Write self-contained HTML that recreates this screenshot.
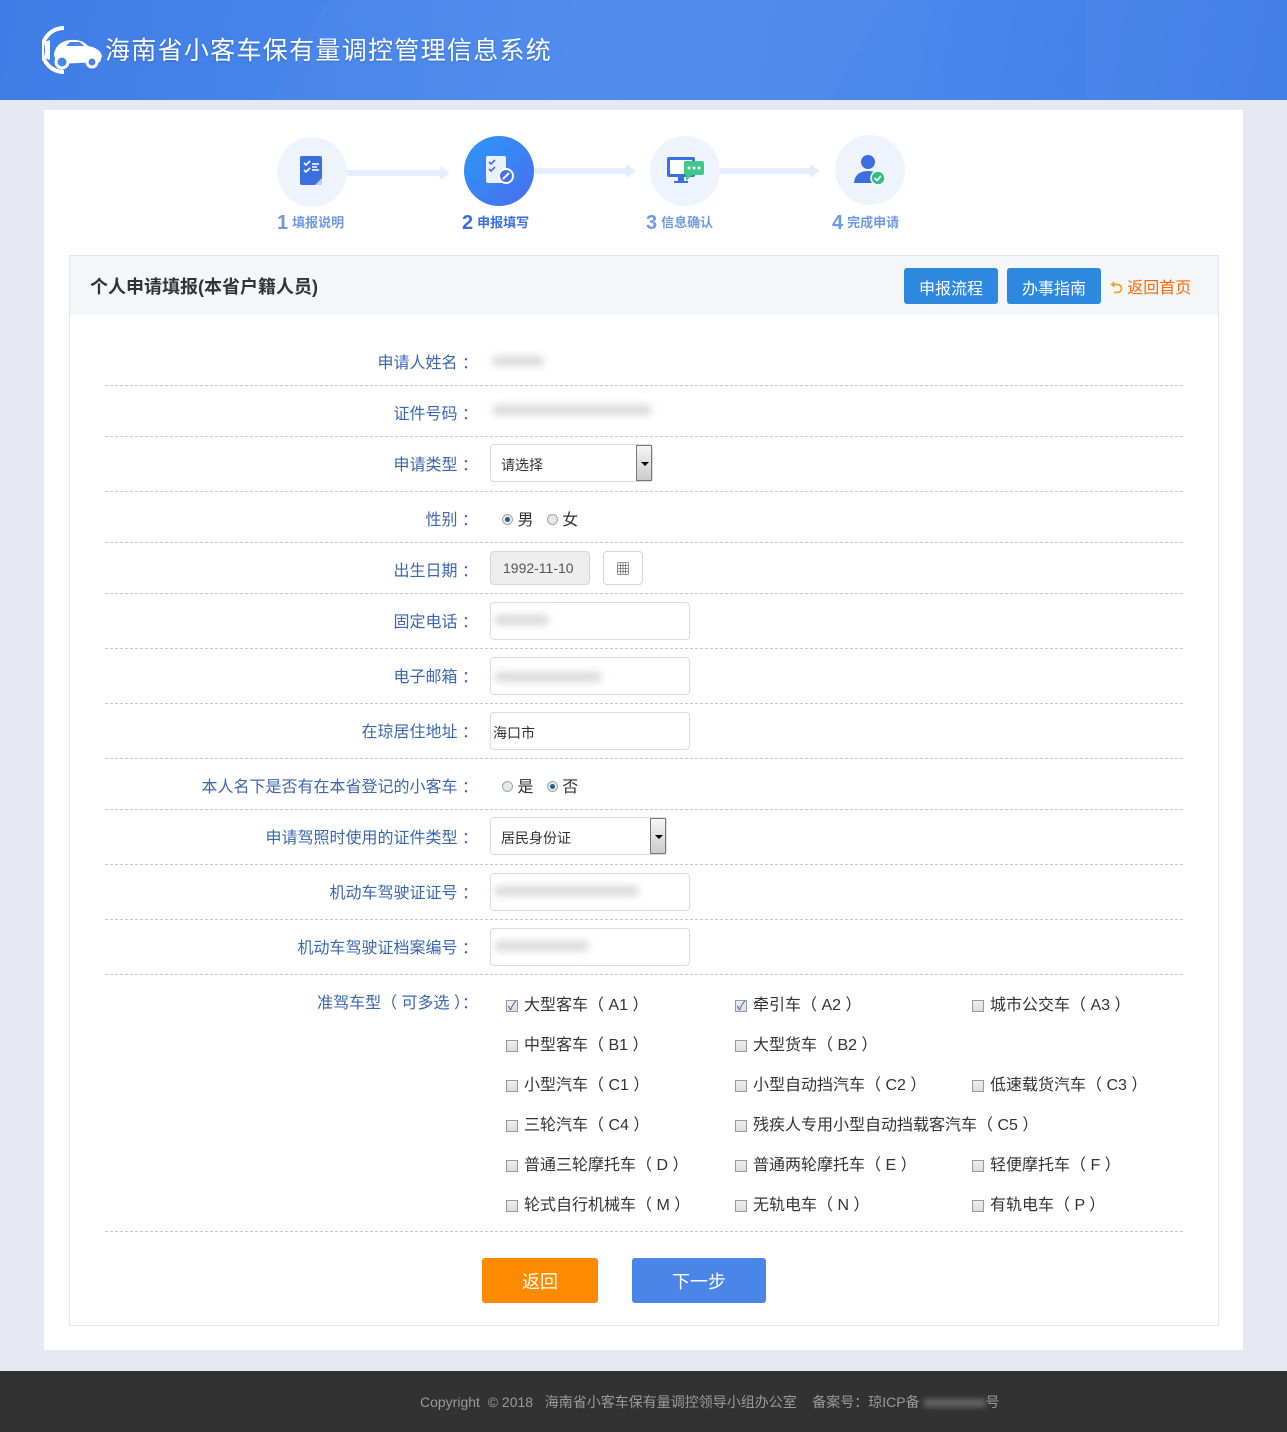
<!DOCTYPE html>
<html><head><meta charset="utf-8">
<style>
*{margin:0;padding:0;box-sizing:border-box}
body{width:1287px;height:1432px;background:#e6e9f2;font-family:"Liberation Sans","Noto Sans CJK SC",sans-serif;position:relative;overflow:hidden;color:#333}
.abs{position:absolute}
.hdr{left:0;top:0;width:1287px;height:100px;background:linear-gradient(100deg,#3f7de6 0%,#4c8bee 45%,#4a88ec 70%,#3c7be6 100%);overflow:hidden}
.title{left:105px;top:31px;color:#fff;font-size:25px;letter-spacing:1.3px;text-shadow:0 1px 2px rgba(0,0,0,.2)}
.wrap{left:44px;top:110px;width:1199px;height:1240px;background:#fff}
.panel{left:69px;top:255px;width:1150px;height:1071px;border:1px solid #e3e6ee;background:#fff}
.ph{left:70px;top:256px;width:1148px;height:59px;background:#f5f6fa}
.circ{width:70px;height:70px;border-radius:50%;background:#eef3fc}
.step{font-size:13px;color:#6e9ae0;font-weight:bold}
.step b{font-size:20px;font-family:"Liberation Sans",sans-serif;margin-right:4px;vertical-align:-2px}
.arrow{height:6px;background:#e5eefc}
.lbl{width:320px;right:809px;text-align:right;color:#3b67b0;font-size:16px;white-space:nowrap}
.dash{left:105px;width:1078px;border-top:1px dashed #c8c8c8}
.inp{left:490px;width:200px;height:38px;border:1px solid #dcdcdc;border-radius:4px;background:#fff;font-size:14px;padding:10px 0 0 2px}
.blur{background:#d8d8d8;filter:blur(4px);height:10px;border-radius:5px}
.radio{width:11px;height:11px;border-radius:50%;border:1px solid #9aa;background:#e8e8e8;display:inline-block}
.radio.on::after{content:"";display:block;width:5px;height:5px;margin:2px;border-radius:50%;background:#245c9c}
.cb{font-size:16px;color:#333;white-space:nowrap}
.cb i{display:inline-block;width:12px;height:12px;border:1px solid #999;background:linear-gradient(#eee,#ddd);vertical-align:-2px;margin-right:6px;position:relative}
.cb i.on::after{content:"✓";position:absolute;left:1px;top:-4px;font-size:12px;color:#3a4fa0;font-style:normal}
.sel{left:490px;height:38px;border:1px solid #dcdcdc;border-radius:4px;font-size:14px;padding:10px 0 0 10px;background:#fff}
.sel .dd{position:absolute;right:0;top:0;width:16px;height:36px;border:1px solid #777;background:linear-gradient(#f5f5f5,#ccc)}
.sel .dd::after{content:"";position:absolute;left:4px;top:16px;border:4px solid transparent;border-top:4px solid #000}
.btn{color:#fff;font-size:16px;text-align:center;border-radius:3px}
</style></head><body>
<div class="abs hdr">
 <div class="abs" style="left:300px;top:-50px;width:560px;height:200px;background:rgba(255,255,255,.025);transform:skewX(-30deg)"></div>
 <div class="abs" style="left:1085px;top:0;width:202px;height:100px;background:rgba(255,255,255,.03)"></div>
 <svg class="abs" style="left:42px;top:24px" width="62" height="52" viewBox="0 0 62 52">
  <path d="M22 4 A22 22 0 1 0 22 48" stroke="#fff" stroke-width="4" fill="none"/>
  <path d="M3 18 L8 16 L8 36 L3 34 Z" fill="#fff"/>
  <path d="M12 30 Q14 18 28 16 Q40 15 46 22 Q58 24 60 32 L58 38 L14 40 Z" fill="#fff"/>
  <circle cx="20" cy="38" r="6" fill="#4a86ea" stroke="#fff" stroke-width="3"/>
  <circle cx="50" cy="38" r="5" fill="#4a86ea" stroke="#fff" stroke-width="3"/>
  <path d="M24 22 L42 22 L38 18 L28 18Z" fill="#4a86ea"/>
 </svg>
 <div class="abs title">海南省小客车保有量调控管理信息系统</div>
</div>
<div class="abs wrap"></div>

<div class="abs circ" style="left:277px;top:137px"></div>
<div class="abs circ" style="left:464px;top:136px;background:linear-gradient(135deg,#2a9af5,#4a6cf0)"></div>
<div class="abs circ" style="left:650px;top:136px"></div>
<div class="abs circ" style="left:835px;top:135px"></div>
<div class="abs arrow" style="left:347px;top:170px;width:95px"></div><div class="abs" style="left:440px;top:166px;border:7px solid transparent;border-left:10px solid #e5eefc"></div>
<div class="abs arrow" style="left:534px;top:168px;width:94px"></div><div class="abs" style="left:626px;top:164px;border:7px solid transparent;border-left:10px solid #e5eefc"></div>
<div class="abs arrow" style="left:720px;top:168px;width:92px"></div><div class="abs" style="left:810px;top:164px;border:7px solid transparent;border-left:10px solid #e5eefc"></div>
<svg class="abs" style="left:299px;top:155px" width="28" height="32"><rect x="1" y="1" width="22" height="29" rx="2" fill="#3b6fe0"/><path d="M16 30 L23 23 L23 30Z" fill="#bcd0f6"/><path d="M5 8 l2 2 4-4 M5 15 l2 2 4-4" stroke="#fff" stroke-width="1.6" fill="none"/><path d="M13 9h7M13 15h7M13 12h5" stroke="#fff" stroke-width="1.6"/></svg>
<svg class="abs" style="left:484px;top:155px" width="32" height="32"><rect x="2" y="1" width="20" height="27" rx="2" fill="#e9f0ff"/><path d="M5 7 l2 2 4-4 M5 14 l2 2 4-4" stroke="#4a6cf0" stroke-width="1.6" fill="none"/><circle cx="22" cy="21" r="8" fill="#fff"/><circle cx="22" cy="21" r="6" fill="#4a6cf0"/><path d="M19 24 L25 18" stroke="#fff" stroke-width="2"/></svg>
<svg class="abs" style="left:666px;top:155px" width="40" height="30"><rect x="1" y="2" width="28" height="20" rx="2" fill="#3b6fe0"/><rect x="4" y="5" width="22" height="14" fill="#fff"/><rect x="12" y="22" width="6" height="4" fill="#3b6fe0"/><rect x="8" y="26" width="14" height="2" fill="#3b6fe0"/><rect x="18" y="6" width="20" height="14" rx="2" fill="#3cc98a"/><path d="M20 20 L20 26 L26 20Z" fill="#3cc98a"/><circle cx="23" cy="13" r="1.5" fill="#fff"/><circle cx="28" cy="13" r="1.5" fill="#fff"/><circle cx="33" cy="13" r="1.5" fill="#fff"/></svg>
<svg class="abs" style="left:852px;top:153px" width="36" height="34"><circle cx="16" cy="9" r="7" fill="#3b6fe0"/><path d="M2 30 Q3 18 16 18 Q29 18 30 30Z" fill="#3b6fe0"/><circle cx="26" cy="25" r="7" fill="#2ec27e" stroke="#fff" stroke-width="1.5"/><path d="M22.5 25 l2.5 2.5 4-4.5" stroke="#fff" stroke-width="1.8" fill="none"/></svg>
<div class="abs step" style="left:277px;top:212px"><b>1</b>填报说明</div>
<div class="abs step" style="left:462px;top:212px;color:#3a6fe0"><b>2</b>申报填写</div>
<div class="abs step" style="left:646px;top:212px"><b>3</b>信息确认</div>
<div class="abs step" style="left:832px;top:212px"><b>4</b>完成申请</div>

<div class="abs panel"></div>
<div class="abs ph"></div>
<div class="abs" style="left:90px;top:273px;font-size:18px;font-weight:bold;color:#333">个人申请填报(本省户籍人员)</div>
<div class="abs btn" style="left:904px;top:268px;width:94px;height:36px;background:#2d89e0;padding-top:7px">申报流程</div>
<div class="abs btn" style="left:1007px;top:268px;width:94px;height:36px;background:#2d89e0;padding-top:7px">办事指南</div>
<div class="abs" style="left:1110px;top:274px;font-size:16px;color:#ff6a00"><span style="color:#f5a030;font-weight:bold">⮌</span> 返回首页</div>

<div class="abs lbl" style="top:349px">申请人姓名 ：</div><div class="abs blur" style="left:492px;top:356px;width:52px"></div>
<div class="abs dash" style="top:385px"></div>
<div class="abs lbl" style="top:400px">证件号码 ：</div><div class="abs blur" style="left:492px;top:405px;width:160px"></div>
<div class="abs dash" style="top:436px"></div>
<div class="abs lbl" style="top:451px">申请类型 ：</div>
<div class="abs sel" style="top:444px;width:163px">请选择<span class="dd"></span></div>
<div class="abs dash" style="top:491px"></div>
<div class="abs lbl" style="top:506px">性别 ：</div>
<div class="abs" style="left:502px;top:506px;font-size:16px"><span class="radio on"></span> 男 &nbsp; <span class="radio"></span> 女</div>
<div class="abs dash" style="top:542px"></div>
<div class="abs lbl" style="top:557px">出生日期 ：</div>
<div class="abs" style="left:490px;top:551px;width:100px;height:34px;background:#eee;border:1px solid #d5d5d5;border-radius:4px;font-size:14px;color:#555;padding:8px 0 0 12px">1992-11-10</div>
<div class="abs" style="left:603px;top:551px;width:40px;height:34px;border:1px solid #d5d5d5;border-radius:4px;text-align:center;padding-top:7px;font-size:14px">▦</div>
<div class="abs dash" style="top:593px"></div>
<div class="abs lbl" style="top:608px">固定电话 ：</div><div class="abs inp" style="top:602px"></div><div class="abs blur" style="left:494px;top:615px;width:55px"></div>
<div class="abs dash" style="top:648px"></div>
<div class="abs lbl" style="top:663px">电子邮箱 ：</div><div class="abs inp" style="top:657px"></div><div class="abs blur" style="left:494px;top:672px;width:108px"></div>
<div class="abs dash" style="top:703px"></div>
<div class="abs lbl" style="top:718px">在琼居住地址 ：</div><div class="abs inp" style="top:712px">海口市</div>
<div class="abs dash" style="top:758px"></div>
<div class="abs lbl" style="top:773px">本人名下是否有在本省登记的小客车 ：</div>
<div class="abs" style="left:502px;top:773px;font-size:16px"><span class="radio"></span> 是 &nbsp; <span class="radio on"></span> 否</div>
<div class="abs dash" style="top:809px"></div>
<div class="abs lbl" style="top:824px">申请驾照时使用的证件类型 ：</div>
<div class="abs sel" style="top:817px;width:177px">居民身份证<span class="dd"></span></div>
<div class="abs dash" style="top:864px"></div>
<div class="abs lbl" style="top:879px">机动车驾驶证证号 ：</div><div class="abs inp" style="top:873px"></div><div class="abs blur" style="left:494px;top:886px;width:145px"></div>
<div class="abs dash" style="top:919px"></div>
<div class="abs lbl" style="top:934px">机动车驾驶证档案编号 ：</div><div class="abs inp" style="top:928px"></div><div class="abs blur" style="left:494px;top:941px;width:95px"></div>
<div class="abs dash" style="top:974px"></div>
<div class="abs lbl" style="top:989px">准驾车型（ 可多选 ）：</div>

<div class="abs cb" style="left:506px;top:991px"><i class="on"></i>大型客车（ A1 ）</div>
<div class="abs cb" style="left:735px;top:991px"><i class="on"></i>牵引车（ A2 ）</div>
<div class="abs cb" style="left:972px;top:991px"><i></i>城市公交车（ A3 ）</div>
<div class="abs cb" style="left:506px;top:1031px"><i></i>中型客车（ B1 ）</div>
<div class="abs cb" style="left:735px;top:1031px"><i></i>大型货车（ B2 ）</div>
<div class="abs cb" style="left:506px;top:1071px"><i></i>小型汽车（ C1 ）</div>
<div class="abs cb" style="left:735px;top:1071px"><i></i>小型自动挡汽车（ C2 ）</div>
<div class="abs cb" style="left:972px;top:1071px"><i></i>低速载货汽车（ C3 ）</div>
<div class="abs cb" style="left:506px;top:1111px"><i></i>三轮汽车（ C4 ）</div>
<div class="abs cb" style="left:735px;top:1111px"><i></i>残疾人专用小型自动挡载客汽车（ C5 ）</div>
<div class="abs cb" style="left:506px;top:1151px"><i></i>普通三轮摩托车（ D ）</div>
<div class="abs cb" style="left:735px;top:1151px"><i></i>普通两轮摩托车（ E ）</div>
<div class="abs cb" style="left:972px;top:1151px"><i></i>轻便摩托车（ F ）</div>
<div class="abs cb" style="left:506px;top:1191px"><i></i>轮式自行机械车（ M ）</div>
<div class="abs cb" style="left:735px;top:1191px"><i></i>无轨电车（ N ）</div>
<div class="abs cb" style="left:972px;top:1191px"><i></i>有轨电车（ P ）</div>
<div class="abs dash" style="top:1231px"></div>

<div class="abs btn" style="left:482px;top:1258px;width:116px;height:45px;background:#ff8a00;padding-top:10px;font-size:18px">返回</div>
<div class="abs btn" style="left:632px;top:1258px;width:134px;height:45px;background:#4a86e8;padding-top:10px;font-size:18px">下一步</div>

<div class="abs" style="left:0;top:1371px;width:1287px;height:61px;background:#323232"></div>
<div class="abs" style="left:420px;top:1392px;font-size:14px;color:#9a9a9a;white-space:nowrap">Copyright &nbsp;© 2018 &nbsp; 海南省小客车保有量调控领导小组办公室 &nbsp; &nbsp;备案号：琼ICP备 <span style="display:inline-block;width:62px;height:8px;background:#666;filter:blur(3px)"></span>号</div>
</body></html>
